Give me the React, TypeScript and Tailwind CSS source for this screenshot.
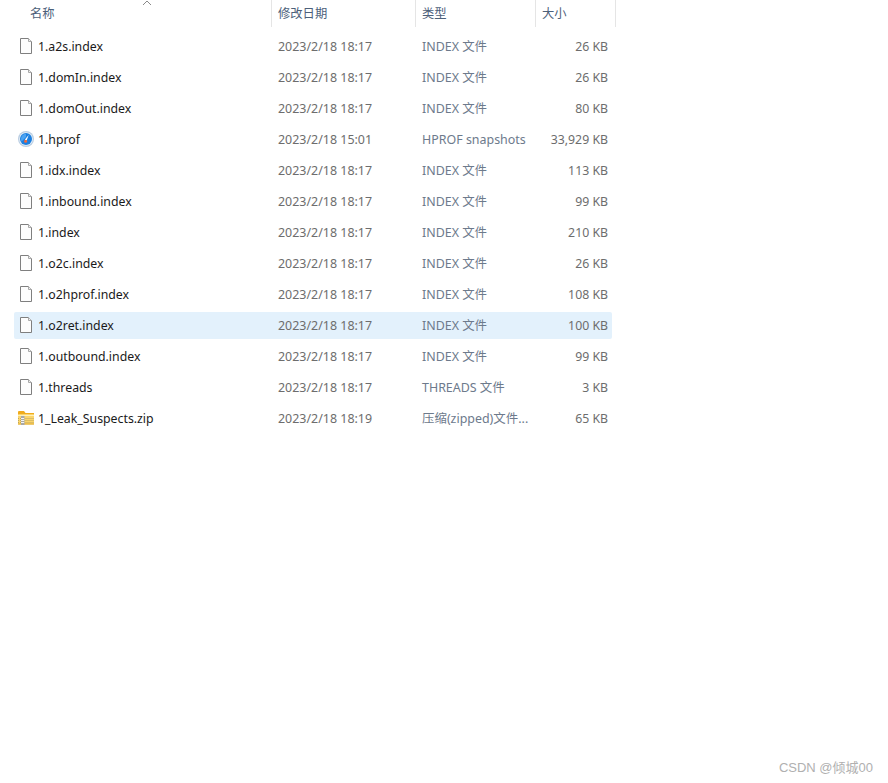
const rows: [string, string, string, string, "file" | "hprof" | "zip"][] = [
  ["1.a2s.index", "2023/2/18 18:17", "INDEX 文件", "26 KB", "file"],
  ["1.domIn.index", "2023/2/18 18:17", "INDEX 文件", "26 KB", "file"],
  ["1.domOut.index", "2023/2/18 18:17", "INDEX 文件", "80 KB", "file"],
  ["1.hprof", "2023/2/18 15:01", "HPROF snapshots", "33,929 KB", "hprof"],
  ["1.idx.index", "2023/2/18 18:17", "INDEX 文件", "113 KB", "file"],
  ["1.inbound.index", "2023/2/18 18:17", "INDEX 文件", "99 KB", "file"],
  ["1.index", "2023/2/18 18:17", "INDEX 文件", "210 KB", "file"],
  ["1.o2c.index", "2023/2/18 18:17", "INDEX 文件", "26 KB", "file"],
  ["1.o2hprof.index", "2023/2/18 18:17", "INDEX 文件", "108 KB", "file"],
  ["1.o2ret.index", "2023/2/18 18:17", "INDEX 文件", "100 KB", "file"],
  ["1.outbound.index", "2023/2/18 18:17", "INDEX 文件", "99 KB", "file"],
  ["1.threads", "2023/2/18 18:17", "THREADS 文件", "3 KB", "file"],
  ["1_Leak_Suspects.zip", "2023/2/18 18:19", "压缩(zipped)文件...", "65 KB", "zip"],
];

function FileIcon() {
  return (
    <svg width="16" height="16" viewBox="0 0 16 16" className="-mt-px shrink-0">
      <path d="M2.5 0.5H10.5L13.5 3.5V15.5H2.5Z" fill="#fdfdfd" stroke="#7f7f7f" strokeWidth="1" />
      <path d="M10.5 0.5V3.5H13.5" fill="#f0f0f0" stroke="#a8a8a8" strokeWidth="1" />
    </svg>
  );
}

function HprofIcon() {
  return (
    <svg width="16" height="16" viewBox="0 0 16 16" className="-mt-px shrink-0">
      <circle cx="8" cy="8" r="8" fill="#b9cde2" />
      <circle cx="8" cy="8" r="6.8" fill="#e9f1f8" />
      <circle cx="8" cy="8" r="6" fill="#1b7fe0" />
      <path d="M3.6 10.5A5.2 5.2 0 0 1 8 2.8V6Z" fill="#4aa3f2" />
      <path d="M10.8 3.8L8.6 9.5L6.8 8.8Z" fill="#ffffff" />
      <circle cx="7.6" cy="10.2" r="1.5" fill="#f0683a" />
    </svg>
  );
}

function ZipIcon() {
  return (
    <svg width="16" height="16" viewBox="0 0 16 16" className="-mt-px shrink-0">
      <path d="M0 2A1 1 0 0 1 1 1H6L7.5 3H16V5H0Z" fill="#f0ab1c" />
      <rect x="0" y="4" width="16" height="10.5" rx="0.5" fill="#fbd56b" />
      <rect x="0" y="5" width="16" height="1" fill="#fff0b8" />
      <rect x="0" y="13.5" width="16" height="1" fill="#e0a92e" />
      <rect x="3" y="6" width="3.5" height="9" fill="#a8a8a8" />
      <path d="M3 8.5H6.5M3 10.5H6.5M3 12.5H6.5" stroke="#f4f4f4" strokeWidth="1" />
      <path d="M6.5 8.5H16M6.5 10.5H16M6.5 12.5H16" stroke="#ad9a5c" strokeWidth="0.8" strokeDasharray="1 1" />
      <path d="M0 8.5H3M0 10.5H3M0 12.5H3" stroke="#ad9a5c" strokeWidth="0.8" strokeDasharray="1 1" />
    </svg>
  );
}

const icons = { file: <FileIcon />, hprof: <HprofIcon />, zip: <ZipIcon /> };

export default function App() {
  return (
    <div className="relative h-[783px] w-[888px] overflow-hidden bg-white font-['Noto_Sans','Noto_Sans_CJK_SC',sans-serif] text-[12.3px] leading-none">
      <div className="flex h-[27px] w-[616px] text-[#4c607a]">
        <div className="relative flex w-[272px] items-center border-r border-[#e5e5e5] pl-[30px] pt-[2px]">
          名称
          <svg width="10" height="6" viewBox="0 0 10 6" className="absolute left-[142px] top-0">
            <path d="M1 5L5 1L9 5" fill="none" stroke="#8a8a8a" strokeWidth="1" />
          </svg>
        </div>
        <div className="flex w-[144px] items-center border-r border-[#e5e5e5] pl-[6px] pt-[2px]">修改日期</div>
        <div className="flex w-[120px] items-center border-r border-[#e5e5e5] pl-[6px] pt-[2px]">类型</div>
        <div className="flex w-[80px] items-center border-r border-[#e5e5e5] pl-[6px] pt-[2px]">大小</div>
      </div>
      <div className="ml-[14px] mt-[6px] flex w-[598px] flex-col gap-1">
        {rows.map(([name, date, type, size, icon]) => (
          <div
            key={name}
            className={`flex h-[27px] items-center rounded-[2px] pr-1 ${name === "1.o2ret.index" ? "bg-[#e3f1fc]" : ""}`}
          >
            <div className="flex w-[264px] items-center gap-[4px] pl-[4px] text-[#1a1a1a]">
              {icons[icon]}
              <span className="pt-[2px]">{name}</span>
            </div>
            <div className="w-[144px] pt-[2px] text-[12.45px] text-[#6d6d6d]">{date}</div>
            <div className="w-[120px] pt-[2px] text-[12.45px] text-[#6d7a8c]">{type}</div>
            <div className="flex-1 pt-[2px] text-right text-[#6d6d6d]">{size}</div>
          </div>
        ))}
      </div>
      <div className="absolute bottom-[5px] right-[15px] font-['Liberation_Sans','Noto_Sans_CJK_SC',sans-serif] text-[13px] leading-[20px] text-[#b0b0b0]">
        CSDN @倾城00
      </div>
    </div>
  );
}
